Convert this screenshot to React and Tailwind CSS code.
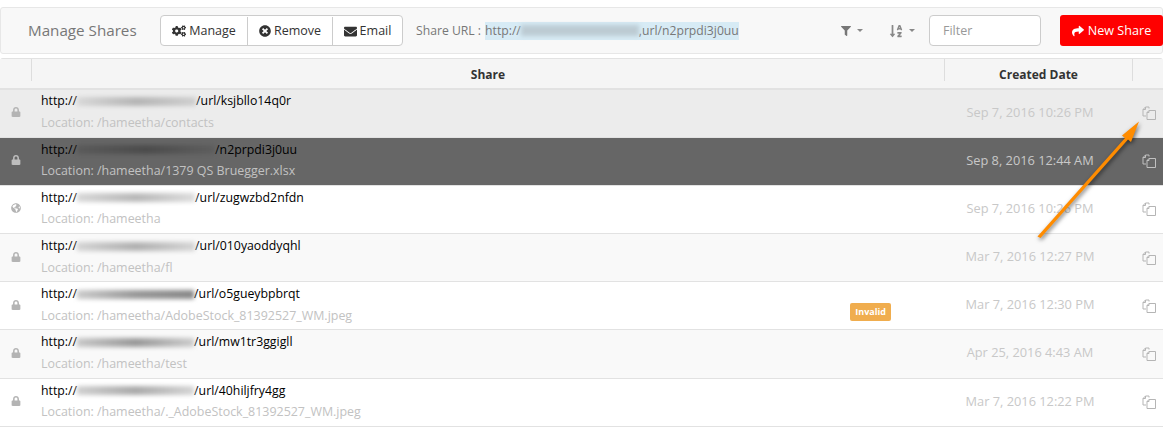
import React from 'react';
import { FaCogs, FaTimesCircle, FaEnvelope, FaFilter, FaSortAlphaDown, FaLock, FaGlobeAmericas, FaShare } from 'react-icons/fa';

const rows = [
  { blur: 'w-[119px] from-[#d8d8d8] via-[#b5b5b5] to-[#cfcfcf]', tail: '/url/ksjbllo14q0r', loc: 'Location: /hameetha/contacts', date: 'Sep 7, 2016 10:26 PM', tone: 'bg-[#ececec]' },
  { blur: 'w-[138px] from-[#5a5a5a] via-[#4c4c4c] to-[#5e5e5e]', tail: '/n2prpdi3j0uu', loc: 'Location: /hameetha/1379 QS Bruegger.xlsx', date: 'Sep 8, 2016 12:44 AM', tone: 'bg-[#666666]', active: true },
  { blur: 'w-[118px] from-[#d8d8d8] via-[#b8b8b8] to-[#dddddd]', tail: '/url/zugwzbd2nfdn', loc: 'Location: /hameetha', date: 'Sep 7, 2016 10:26 PM', tone: 'bg-white', globe: true },
  { blur: 'w-[118px] from-[#d4d4d4] via-[#b0b0b0] to-[#d5d5d5]', tail: '/url/010yaoddyqhl', loc: 'Location: /hameetha/fl', date: 'Mar 7, 2016 12:27 PM', tone: 'bg-[#f9f9f9]' },
  { blur: 'w-[117px] from-[#cccccc] via-[#999999] to-[#888888]', tail: '/url/o5gueybpbrqt', loc: 'Location: /hameetha/AdobeStock_81392527_WM.jpeg', date: 'Mar 7, 2016 12:30 PM', tone: 'bg-white', invalid: true },
  { blur: 'w-[117px] from-[#c8c8c8] via-[#999999] to-[#cccccc]', tail: '/url/mw1tr3ggigll', loc: 'Location: /hameetha/test', date: 'Apr 25, 2016 4:43 AM', tone: 'bg-[#f9f9f9]' },
  { blur: 'w-[117px] from-[#d0d0d0] via-[#aaaaaa] to-[#d5d5d5]', tail: '/url/40hiljfry4gg', loc: 'Location: /hameetha/._AdobeStock_81392527_WM.jpeg', date: 'Mar 7, 2016 12:22 PM', tone: 'bg-white' },
];

function CopyIcon({ color }) {
  return (
    <svg width="14" height="14" viewBox="0 0 14 14" fill="none" stroke={color} strokeWidth="1">
      <path d="M7 2.500V1H3.500L1 3.500V10h3" />
      <path d="M1 3.500h2.500V1" />
      <path d="M7 4.500h6.500v9h-8.500v-7z" />
      <path d="M5 6.500h2v-2" />
    </svg>
  );
}

function Caret() {
  return <span className="ml-[6px] inline-block h-0 w-0 border-x-[3px] border-t-[3px] border-x-transparent border-t-[#888]" />;
}

function Row({ row }) {
  const iconColor = row.active ? 'text-[#bdbdbd]' : 'text-[#b4b4b4]';
  return (
    <div className={`flex h-[48.2px] border-b border-[#e2e2e2] ${row.tone}`}>
      <div className={`flex w-[31px] items-center justify-center pb-[2px] pl-[1px] text-[10px] ${iconColor}`}>
        {row.globe ? <FaGlobeAmericas /> : <FaLock />}
      </div>
      <div className="flex min-w-0 flex-1 items-center pl-[10px]">
        <div className="flex-1 pb-[3px]">
          <div className="flex h-[24px] items-center pb-[3px] text-[12.300px] text-black">
            <span>http://</span>
            <span className={`h-[9px] bg-linear-to-r blur-[2px] ${row.blur}`} />
            <span>{row.tail}</span>
          </div>
          <div className="-mt-[2px] text-[12.450px] leading-[19px] text-[#c2c2c2]">{row.loc}</div>
        </div>
        {row.invalid && (
          <span className="mt-[13px] mr-[53px] rounded-[2px] bg-[#f0ad4e] px-[5px] py-[2px] text-[9px] leading-[14px] font-bold text-white">Invalid</span>
        )}
      </div>
      <div className="flex w-[188px] items-center justify-center pr-[16px] pb-[2px] text-[12.800px] text-[#c8c8c8]">
        {row.date}
      </div>
      <div className="flex w-[31px] items-center justify-center pl-[2px]">
        <CopyIcon color={row.active ? '#c0c0c0' : '#b5b5b5'} />
      </div>
    </div>
  );
}

export default function App() {
  return (
    <div className="relative h-[427px] w-[1167px] overflow-hidden bg-white pt-[7px] pr-[4px] font-['Open_Sans',sans-serif] text-[12px]">
      <div className="flex h-[47px] items-center rounded-[3px] border border-[#e7e7e7] bg-[#f8f8f8]">
        <div className="w-[159px] pl-[27px] text-[15.200px] text-[#777777]">Manage Shares</div>
        <div className="flex h-[31px] overflow-hidden rounded-[4px] border border-[#cccccc] bg-white pt-[1px] text-[12.500px] text-[#333]">
          <button className="flex w-[87px] items-center justify-center gap-[3px] border-r border-[#cccccc]"><FaCogs className="text-[14px]" />Manage</button>
          <button className="flex w-[85px] items-center justify-center gap-[3px] border-r border-[#cccccc]"><FaTimesCircle className="text-[12px]" />Remove</button>
          <button className="flex w-[69px] items-center justify-center gap-[3px]"><FaEnvelope className="text-[13px]" />Email</button>
        </div>
        <div className="ml-[13px] flex items-center pt-[1px] text-[12.200px] text-[#777777]">
          <span className="mr-[4px]">Share URL :</span>
          <span className="flex h-[18px] items-center bg-[#d7ebf5]">
            http://
            <span className="h-[11px] w-[118px] bg-[#bccbd3] blur-[2px]" />
            ,url/n2prpdi3j0uu
          </span>
        </div>
        <div className="flex-1" />
        <div className="flex items-center text-[#777]"><FaFilter className="text-[10px]" /><Caret /></div>
        <div className="ml-[26px] flex items-center text-[#888]"><FaSortAlphaDown className="text-[14px]" /><Caret /></div>
        <input className="ml-[14px] h-[31px] w-[112px] rounded-[4px] border border-[#cccccc] bg-white px-[13px] text-[12.500px] placeholder:text-[#999]" placeholder="Filter" />
        <button className="-mr-[1px] ml-[19px] flex h-[31px] w-[103px] items-center justify-center gap-[4px] rounded-[3px] bg-[#ff0000] pt-[1px] text-[12.600px] text-white"><FaShare className="text-[12px]" />New Share</button>
      </div>

      <div className="mt-[4px] rounded-t-[3px] border-t border-[#e2e2e2]">
        <div className="flex h-[30.500px] border-b-2 border-[#e2e2e2] bg-[#f5f5f5] font-bold text-[#333]">
          <div className="w-[31px]" />
          <div className="flex h-[22px] flex-1 items-center justify-center self-start border-l border-[#dddddd] pt-[10px]">Share</div>
          <div className="flex h-[22px] w-[188px] items-center justify-center self-start border-l border-[#dddddd] pt-[10px]">Created Date</div>
          <div className="h-[22px] w-[31px] border-l border-[#dddddd]" />
        </div>
        {rows.map((row) => (
          <Row key={row.tail} row={row} />
        ))}
      </div>

      <svg className="absolute top-0 left-0 drop-shadow-[1px_2px_2px_rgba(0,0,0,0.55)]" width="1167" height="427" fill="#ff8c00" stroke="none">
        <path d="M1037.500 236.500L1125 138l-3-2.500 17-14-8 20.500-3-2.500-87.500 98.500z" />
      </svg>
    </div>
  );
}
